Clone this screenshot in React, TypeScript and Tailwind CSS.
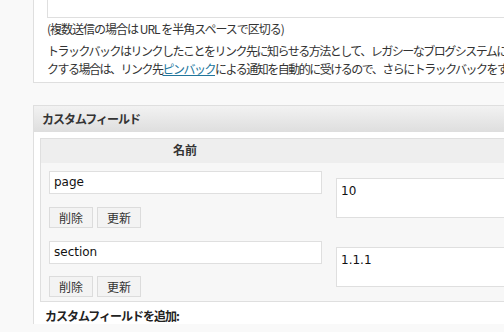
const jp = { fontFamily: '"Noto Sans CJK JP", "Noto Sans", sans-serif' };
const latin = { fontFamily: '"DejaVu Sans", Verdana, "Noto Sans CJK JP", sans-serif' };

type Field = { name: string; value: string };

const fields: Field[] = [
  { name: 'page', value: '10' },
  { name: 'section', value: '1.1.1' },
];

function SmallButton({ label }: { label: string }) {
  return (
    <button
      className="block h-[21px] px-[9px] bg-[#f3f3f3] border border-[#dcdcdc] text-[12px] leading-[19px] text-[#333]"
      style={jp}
    >
      {label}
    </button>
  );
}

function FieldRow({ field, rowH, btnGap, valueTop }: { field: Field; rowH: string; btnGap: string; valueTop: string }) {
  return (
    <div className={`flex bg-[#f7f7f7] ${rowH}`}>
      <div className="w-[288px] shrink-0 pl-[8px] pt-[8px]">
        <div
          className="w-[273px] h-[23px] bg-white border border-[#dfdfdf] pl-[4px] text-[12px] leading-[21px] text-[#111]"
          style={latin}
        >
          {field.name}
        </div>
        <div className={`flex gap-[4px] ${btnGap}`}>
          <SmallButton label="削除" />
          <SmallButton label="更新" />
        </div>
      </div>
      <div className={`pl-[7px] ${valueTop}`}>
        <div
          className="w-[300px] h-[40px] bg-white border border-[#dfdfdf] pl-[4px] pt-[4px] text-[12px] leading-[16px] text-[#111]"
          style={latin}
        >
          {field.value}
        </div>
      </div>
    </div>
  );
}

export default function App() {
  return (
    <div className="w-[504px] h-[332px] overflow-hidden bg-[#f9f9f9] text-[#333]">
      {/* Trackback box (top cut off) */}
      <div className="ml-[33px] w-[600px] bg-white border-l border-b border-[#dfdfdf] pl-[13px] pb-[4px]">
        <div className="w-[560px] h-[18px] border-l border-b border-[#dfdfdf]" />
        <p
          className="mt-[3px] h-[16px] whitespace-nowrap text-[12px] leading-[16px] text-[#333] tracking-[-1px]"
          style={jp}
        >
          (複数送信の場合は URL を半角スペースで区切る)
        </p>
        <div className="mt-[5px] text-[12px] text-[#333] tracking-[-1.5px]" style={jp}>
          <p className="h-[18px] leading-[18px] whitespace-nowrap">
            トラックバックはリンクしたことをリンク先に知らせる方法として、レガシーなブログシステムにリン
          </p>
          <p className="h-[18px] leading-[18px] whitespace-nowrap">
            クする場合は、リンク先<span className="text-[#21759b] underline">ピンバック</span>
            による通知を自動的に受けるので、さらにトラックバックをする必要はありません。
          </p>
        </div>
      </div>

      {/* Custom fields box */}
      <div className="mt-[22px] ml-[33px] w-[600px] bg-white border-l border-t border-[#dfdfdf]">
        <div
          className="h-[26px] pl-[8px] bg-gradient-to-b from-[#f2f2f2] to-[#dedede] text-[12px] leading-[26px] font-bold text-[#333] tracking-[-1px]"
          style={jp}
        >
          カスタムフィールド
        </div>
        <div className="mt-[6px] ml-[6px] border-l border-t border-b border-[#dfdfdf]">
          <div className="flex h-[24px] bg-[#eeeeee]">
            <div
              className="w-[288px] text-center text-[12px] leading-[22px] font-bold text-[#333]"
              style={jp}
            >
              名前
            </div>
          </div>
          <FieldRow field={fields[0]} rowH="h-[70px]" btnGap="mt-[13px]" valueTop="pt-[15px]" />
          <FieldRow field={fields[1]} rowH="h-[68px]" btnGap="mt-[12px]" valueTop="pt-[14px]" />
        </div>
        <div
          className="pl-[11px] pt-[6px] text-[12px] leading-[16px] font-bold text-[#222] tracking-[-1px]"
          style={jp}
        >
          カスタムフィールドを追加:
        </div>
      </div>
    </div>
  );
}
